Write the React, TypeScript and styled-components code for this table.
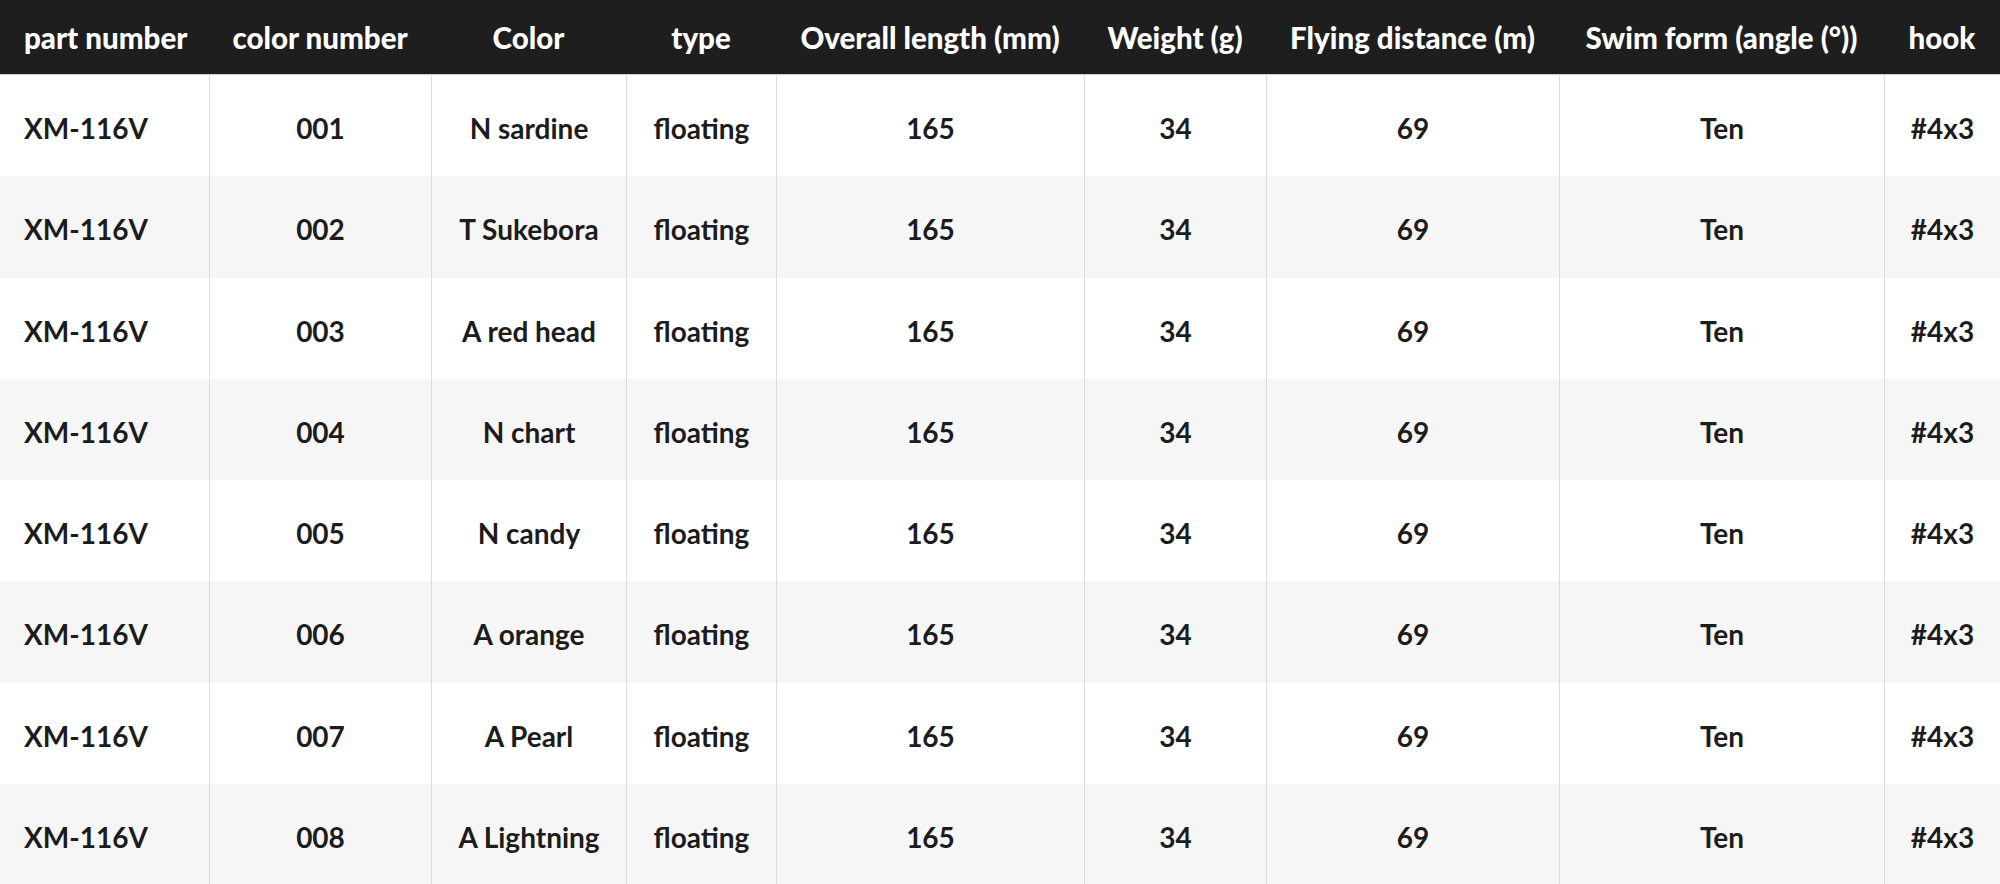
import React from "react";
import styled, { createGlobalStyle } from "styled-components";

const GlobalStyle = createGlobalStyle`
  html, body { margin: 0; padding: 0; background: #ffffff; }
  body { font-family: "Lato", "Noto Sans", sans-serif; }
`;

const COLS = "209px 222px 195px 150px 308px 182px 293px 325px 116px";

const Table = styled.div`
  width: 2000px;
  display: flex;
  flex-direction: column;
`;

const HeadRow = styled.div`
  display: grid;
  grid-template-columns: ${COLS};
  height: 74px;
  background: #1e1e1e;
  border-bottom: 1px solid #cfcfcf;
`;

const HeadCell = styled.div<{ $left?: boolean }>`
  display: flex;
  align-items: center;
  justify-content: ${(p) => (p.$left ? "flex-start" : "center")};
  padding-left: ${(p) => (p.$left ? "24px" : "0")};
  color: #ffffff;
  font-family: "Lato", sans-serif;
  font-weight: 900;
  font-size: 29.5px;
  white-space: nowrap;
`;

const BodyRow = styled.div<{ $alt: boolean }>`
  display: grid;
  grid-template-columns: ${COLS};
  height: 101.25px;
  background: ${(p) => (p.$alt ? "#f6f6f6" : "#ffffff")};
`;

const Cell = styled.div<{ $left?: boolean }>`
  display: flex;
  align-items: center;
  justify-content: ${(p) => (p.$left ? "flex-start" : "center")};
  padding-left: ${(p) => (p.$left ? "24px" : "0")};
  padding-top: 5px;
  border-left: ${(p) => (p.$left ? "none" : "1px solid #dddddd")};
  color: #1c1c1c;
  font-family: "Lato", sans-serif;
  font-weight: 700;
  font-size: 28px;
  white-space: nowrap;
`;

const headers = [
  "part number",
  "color number",
  "Color",
  "type",
  "Overall length (mm)",
  "Weight (g)",
  "Flying distance (m)",
  "Swim form (angle (°))",
  "hook",
];

const colors = [
  "N sardine",
  "T Sukebora",
  "A red head",
  "N chart",
  "N candy",
  "A orange",
  "A Pearl",
  "A Lightning",
];

const rows = colors.map((c, i) => [
  "XM-116V",
  `00${i + 1}`,
  c,
  "floating",
  "165",
  "34",
  "69",
  "Ten",
  "#4x3",
]);

export default function App() {
  return (
    <>
      <GlobalStyle />
      <Table>
        <HeadRow>
          {headers.map((h, i) => (
            <HeadCell key={h} $left={i === 0}>
              {h}
            </HeadCell>
          ))}
        </HeadRow>
        {rows.map((r, ri) => (
          <BodyRow key={ri} $alt={ri % 2 === 1}>
            {r.map((v, ci) => (
              <Cell key={ci} $left={ci === 0}>
                {v}
              </Cell>
            ))}
          </BodyRow>
        ))}
      </Table>
    </>
  );
}
